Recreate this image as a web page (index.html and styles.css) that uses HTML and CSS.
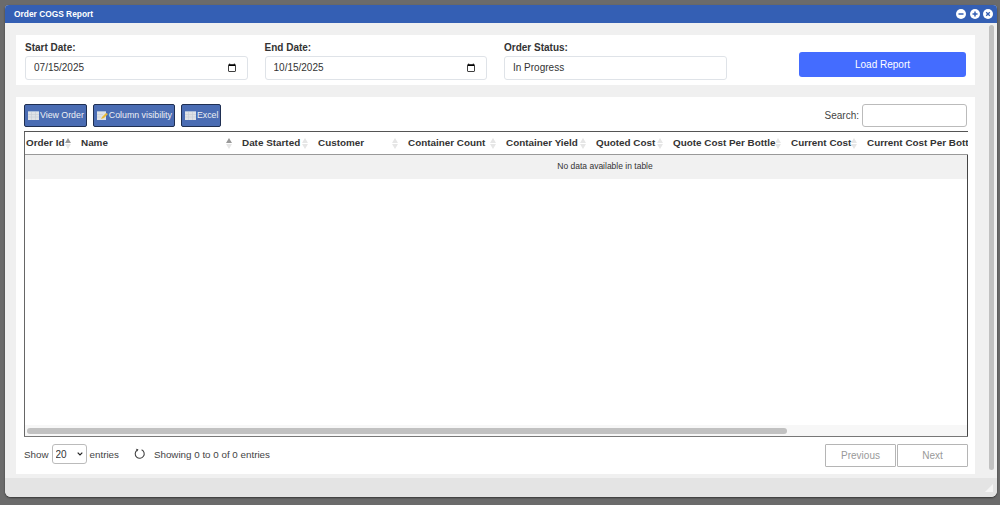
FILE: index.html
```html
<!DOCTYPE html>
<html lang="en">
<head>
<meta charset="utf-8">
<title>Order COGS Report</title>
<link rel="stylesheet" href="styles.css">
</head>
<body>
<div class="window">
  <header class="titlebar">
    <span class="title">Order COGS Report</span>
    <div class="win-controls">
      <span class="win-btn"><svg viewBox="0 0 10 10"><circle cx="5" cy="5" r="5" fill="#fff"/><path d="M2.5 5h5" stroke="#345fb4" stroke-width="1.5"/></svg></span>
      <span class="win-btn"><svg viewBox="0 0 10 10"><circle cx="5" cy="5" r="5" fill="#fff"/><path d="M2.5 5h5M5 2.5v5" stroke="#345fb4" stroke-width="1.5"/></svg></span>
      <span class="win-btn"><svg viewBox="0 0 10 10"><circle cx="5" cy="5" r="5" fill="#fff"/><path d="M3.2 3.2l3.6 3.6M6.8 3.2l-3.6 3.6" stroke="#345fb4" stroke-width="1.3"/></svg></span>
    </div>
  </header>
  <div class="content-wrap">
    <main class="content">
      <section class="panel filters">
        <div class="field">
          <label class="field-label" for="start">Start Date:</label>
          <input class="field-input" id="start" type="date" value="2025-07-15">
        </div>
        <div class="field">
          <label class="field-label" for="end">End Date:</label>
          <input class="field-input" id="end" type="date" value="2025-10-15">
        </div>
        <div class="field">
          <label class="field-label" for="status">Order Status:</label>
          <input class="field-input" id="status" type="text" value="In Progress">
        </div>
        <button class="load-btn" type="button">Load Report</button>
      </section>
      <section class="panel report">
        <div class="toolbar">
          <div class="tool-buttons">
            <button class="tool-btn" type="button"><svg class="tool-icon" viewBox="0 0 11 9"><rect width="11" height="9" fill="#dfe2e6"/><path d="M0 .5h11" stroke="#a9bcd8"/><path d="M0 3.5h11M0 6h11M3.5 1v8M7.5 1v8" stroke="#c6ccd4" stroke-width=".6"/></svg><span>View Order</span></button>
            <button class="tool-btn" type="button"><svg class="tool-icon" viewBox="0 0 11 9"><rect width="9" height="9" fill="#dfe2e6"/><path d="M0 .5h9" stroke="#a9bcd8"/><path d="M0 3.5h6M0 6h4" stroke="#c6ccd4" stroke-width=".6"/><path d="M4 8l1-2 4-4 2 1-4 4z" fill="#e9b93a"/></svg><span>Column visibility</span></button>
            <button class="tool-btn" type="button"><svg class="tool-icon" viewBox="0 0 11 9"><rect width="11" height="9" fill="#dfe2e6"/><path d="M0 .5h11" stroke="#a9bcd8"/><path d="M0 3.5h11M0 6h11M3.5 1v8M7.5 1v8" stroke="#c6ccd4" stroke-width=".6"/></svg><span>Excel</span></button>
          </div>
          <label class="search">Search:<input class="search-input" type="text"></label>
        </div>
        <div class="table-box">
          <div class="table-clip">
            <table class="data-table">
              <colgroup>
                <col class="c1"><col class="c2"><col class="c3"><col class="c4"><col class="c5"><col class="c6"><col class="c7"><col class="c8"><col class="c9"><col class="c10">
              </colgroup>
              <thead>
                <tr>
                  <th class="sorted">Order Id</th>
                  <th class="sorted">Name</th>
                  <th>Date Started</th>
                  <th>Customer</th>
                  <th>Container Count</th>
                  <th>Container Yield</th>
                  <th>Quoted Cost</th>
                  <th>Quote Cost Per Bottle</th>
                  <th>Current Cost</th>
                  <th>Current Cost Per Bottle</th>
                </tr>
              </thead>
            </table>
          </div>
          <div class="table-body">
            <div class="empty-row">No data available in table</div>
          </div>
          <div class="h-scroll"><div class="h-thumb"></div></div>
        </div>
        <div class="table-footer">
          <div class="footer-left">
            <label class="length">Show
              <span class="select-wrap">
                <select class="length-select"><option>20</option></select>
                <svg class="select-arrow" viewBox="0 0 6 4"><path d="M.7.7L3 3l2.300-2.300" fill="none" stroke="#222" stroke-width="1.200"/></svg>
              </span>
              entries</label>
            <svg class="reload" viewBox="0 0 12 12"><path d="M7.6 1.700A4.500 4.500 0 1 1 3 2.200" fill="none" stroke="#444" stroke-width="1.100"/><path d="M1.800 .8l2.600.5-.9 2.200z" fill="#444"/></svg>
            <span class="info">Showing 0 to 0 of 0 entries</span>
          </div>
          <div class="pager">
            <button class="page-btn" type="button">Previous</button>
            <button class="page-btn" type="button">Next</button>
          </div>
        </div>
      </section>
    </main>
    <div class="v-scroll"><div class="v-thumb"></div></div>
  </div>
  <footer class="statusbar"><span class="grip"></span></footer>
</div>
</body>
</html>
```
FILE: styles.css
```css
* { box-sizing: border-box; }
html, body { height: 100%; }
body {
  margin: 0;
  background: #6b6b6b;
  padding: 5px 3px 8px 5px;
  font-family: "Liberation Sans", Arial, sans-serif;
  color: #333;
  overflow: hidden;
}
.window {
  height: 492px;
  background: #f0f0f0;
  border-radius: 4px 4px 6px 6px;
  display: flex;
  flex-direction: column;
  overflow: hidden;
  box-shadow: 0 1px 2px rgba(0,0,0,.5);
}
.titlebar {
  height: 18px;
  flex: none;
  background: #345fb4;
  display: flex;
  align-items: center;
  justify-content: space-between;
  padding: 0 4px 0 9px;
}
.title { font-size: 8.4px; font-weight: 700; color: #fff; }
.win-controls { display: flex; gap: 3.5px; }
.win-btn { width: 10px; height: 10px; display: block; }
.win-btn svg { display: block; width: 10px; height: 10px; }
.content-wrap { flex: 1; display: flex; min-height: 0; }
.content {
  flex: 1;
  padding: 12px 12px 4px 11px;
  display: flex;
  flex-direction: column;
  gap: 12px;
  min-width: 0;
}
.panel { background: #fff; }
.filters {
  height: 50px;
  flex: none;
  display: flex;
  align-items: flex-start;
  padding: 6px 9px 0 9px;
  gap: 17px;
}
.field { width: 222.5px; display: flex; flex-direction: column; }
.field-label { font-size: 10px; font-weight: 700; height: 15px; line-height: 13px; color: #333; }
.field-input {
  height: 24px;
  width: 100%;
  border: 1px solid #dfe3e8;
  border-radius: 3px;
  background: #fff;
  padding: 0 8px 1px;
  font: 10px "Liberation Sans", Arial, sans-serif;
  color: #333;
}
.field-input::-webkit-datetime-edit-fields-wrapper,
.field-input::-webkit-datetime-edit,
.field-input::-webkit-datetime-edit-month-field,
.field-input::-webkit-datetime-edit-day-field,
.field-input::-webkit-datetime-edit-year-field,
.field-input::-webkit-datetime-edit-text { padding: 0; }
.load-btn {
  margin: 11px 0 0 auto;
  width: 167px;
  height: 24.5px;
  background: #446cff;
  border: 0;
  border-radius: 3px;
  color: #fff;
  font: 10px "Liberation Sans", Arial, sans-serif;
  padding: 0;
}
.report {
  flex: 1;
  min-height: 0;
  padding: 7px 7px 0 8px;
  display: flex;
  flex-direction: column;
}
.toolbar {
  height: 27px;
  flex: none;
  display: flex;
  justify-content: space-between;
  align-items: flex-start;
  padding-right: 1px;
}
.tool-buttons { display: flex; gap: 6px; }
.tool-btn {
  height: 23px;
  padding: 0 2px 2px 3px;
  display: flex;
  align-items: center;
  gap: 1px;
  background: #4a6cb3;
  border: 1px solid #1f2f52;
  border-radius: 2px;
  color: #eef0f4;
  font: 8.8px "Liberation Sans", Arial, sans-serif;
}
.tool-icon { width: 11px; height: 9px; flex: none; margin-top: 2px; }
.search { display: flex; align-items: center; gap: 3px; font-size: 10px; color: #444; }
.search-input {
  width: 105px;
  height: 23px;
  border: 1px solid #bbb;
  border-radius: 3px;
  background: #fff;
}
.table-box {
  height: 306px;
  flex: none;
  display: flex;
  flex-direction: column;
  border-top: 1px solid #555;
  border-bottom: 1px solid #777;
}
.table-clip { overflow: hidden; flex: none; height: 23px; border-left: 1px solid #666; }
.data-table { border-collapse: collapse; table-layout: fixed; width: 990px; }
.c1 { width: 54px; }
.c2 { width: 161px; }
.c3 { width: 76px; }
.c4 { width: 90px; }
.c5 { width: 98px; }
.c6 { width: 90px; }
.c7 { width: 77px; }
.c8 { width: 118px; }
.c9 { width: 76px; }
.c10 { width: 150px; }
.data-table th {
  height: 23px;
  padding: 0 2px 1px;
  border-bottom: 2px solid #999;
  font-size: 9.9px;
  font-weight: 700;
  text-align: left;
  white-space: nowrap;
  color: #333;
  background: #fff;
  position: relative;
  overflow: hidden;
}
.data-table th:first-child { padding-left: 1px; }
.data-table th::before, .data-table th::after {
  content: "";
  position: absolute;
  right: 8px;
  border-left: 3px solid transparent;
  border-right: 3px solid transparent;
}
.data-table th::before { top: 6px; border-bottom: 5px solid #e6e6e6; }
.data-table th::after { top: 12px; border-top: 5px solid #e6e6e6; }
.data-table th.sorted::before { border-bottom-color: #999; }
.table-body {
  flex: 1;
  min-height: 0;
  border-left: 1px solid #666;
  border-right: 1px solid #444;
  background: #fff;
  overflow: hidden;
}
.empty-row {
  width: 1160px;
  height: 24px;
  padding-bottom: 2px;
  background: #f1f1f1;
  display: flex;
  align-items: center;
  justify-content: center;
  font-size: 8.5px;
  color: #333;
}
.h-scroll {
  height: 11px;
  flex: none;
  background: #f7f7f7;
  border-left: 1px solid #666;
  border-right: 1px solid #444;
  padding: 3px 0 2px 2px;
}
.h-thumb { width: 760px; height: 6px; background: #c1c1c1; border-radius: 3px; }
.table-footer {
  flex: none;
  display: flex;
  justify-content: space-between;
  align-items: flex-start;
  padding-top: 7px;
}
.footer-left { display: flex; align-items: center; height: 20px; font-size: 9.8px; color: #444; }
.length { display: flex; align-items: center; gap: 3px; }
.select-wrap { display: block; position: relative; width: 35px; height: 20px; }
.length-select {
  appearance: none;
  display: block;
  width: 35px;
  height: 20px;
  border: 1px solid #bbb;
  border-radius: 3px;
  background: #fff;
  font: 10px "Liberation Sans", Arial, sans-serif;
  color: #333;
  padding: 0 0 0 3px;
}
.select-arrow {
  position: absolute;
  right: 4px;
  top: 8px;
  width: 6px;
  height: 4px;
  pointer-events: none;
}
.reload { width: 12px; height: 12px; margin: 0 8px 0 15px; }
.info { margin-top: 1px; }
.pager { display: flex; gap: 1px; }
.page-btn {
  width: 71px;
  height: 23px;
  background: #fff;
  border: 1px solid #b5b5b5;
  border-radius: 1px;
  color: #999;
  font: 10px "Liberation Sans", Arial, sans-serif;
  padding: 0 0 1px;
}
.v-scroll { width: 10px; flex: none; padding: 2px 3px 8px 2px; }
.v-thumb { height: 100%; background: #c1c1c1; border-radius: 3px; }
.statusbar { height: 19px; flex: none; background: #e4e4e4; position: relative; }
.grip {
  position: absolute;
  right: 4px;
  bottom: 5px;
  border-left: 8px solid transparent;
  border-bottom: 8px solid #f5f5f5;
}
```
